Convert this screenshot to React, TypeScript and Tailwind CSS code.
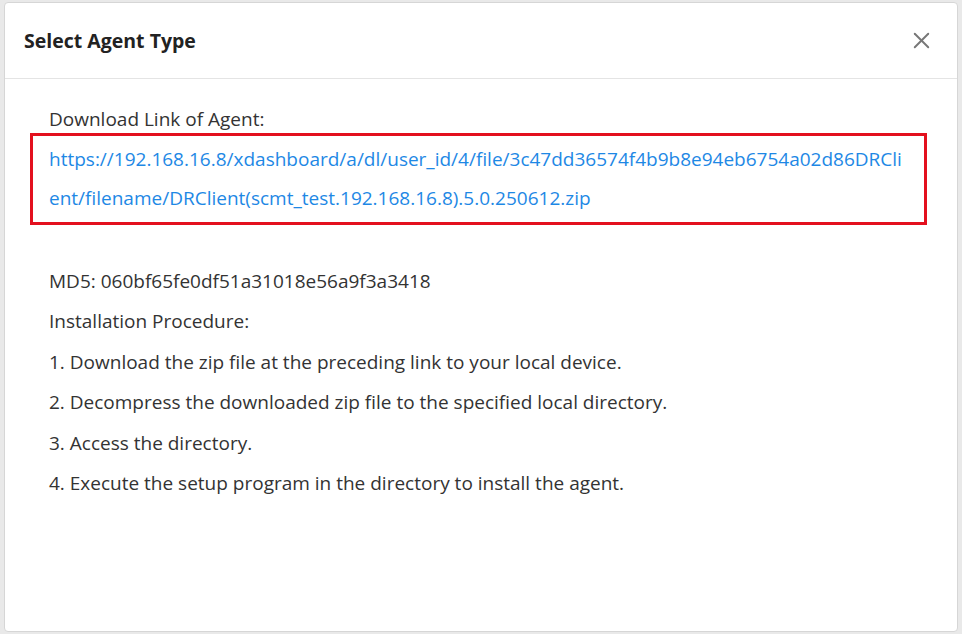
import { X } from 'lucide-react';

const downloadUrl =
	'https://192.168.16.8/xdashboard/a/dl/user_id/4/file/3c47dd36574f4b9b8e94eb6754a02d86DRClient/filename/DRClient(scmt_test.192.168.16.8).5.0.250612.zip';

const steps = [
	'1. Download the zip file at the preceding link to your local device.',
	'2. Decompress the downloaded zip file to the specified local directory.',
	'3. Access the directory.',
	'4. Execute the setup program in the directory to install the agent.',
];

export default function App() {
	return (
		<div
			className="h-[634px] w-[962px] overflow-hidden bg-[#e9e9e9] pl-[4px] pr-[4px] pt-[2px] pb-[2px]"
			style={{ fontFamily: '"Open Sans", "Noto Sans", sans-serif' }}
		>
			<div className="flex h-full flex-col rounded-[4px] border border-[#d6d6d6] bg-white">
				{/* Header */}
				<div className="flex h-[76px] shrink-0 items-center justify-between border-b border-[#e4e4e4] pl-[19px] pr-[22px]">
					<h2 className="text-[19.5px] font-bold text-[#222]">Select Agent Type</h2>
					<button type="button" className="text-[#777]">
						<X size={27} strokeWidth={1.7} />
					</button>
				</div>

				{/* Body */}
				<div className="pl-[25px] pr-[30px] pt-[26px] text-[19px] text-[#333]">
					<p className="pl-[19px] leading-[28px]">Download Link of Agent:</p>
					<div className="border-[3px] border-[#e3101e] px-[16px] py-[4px]">
						<a href={downloadUrl} className="block whitespace-nowrap leading-[39px] text-[#1e88e5]">
							https://192.168.16.8/xdashboard/a/dl/user_id/4/file/3c47dd36574f4b9b8e94eb6754a02d86DRCli
							<br />
							ent/filename/DRClient(scmt_test.192.168.16.8).5.0.250612.zip
						</a>
					</div>

					<div className="mt-[36px] pl-[19px] leading-[40.4px]">
						<p>MD5: 060bf65fe0df51a31018e56a9f3a3418</p>
						<p>Installation Procedure:</p>
						{steps.map(step => (
							<p key={step}>{step}</p>
						))}
					</div>
				</div>
			</div>
		</div>
	);
}
